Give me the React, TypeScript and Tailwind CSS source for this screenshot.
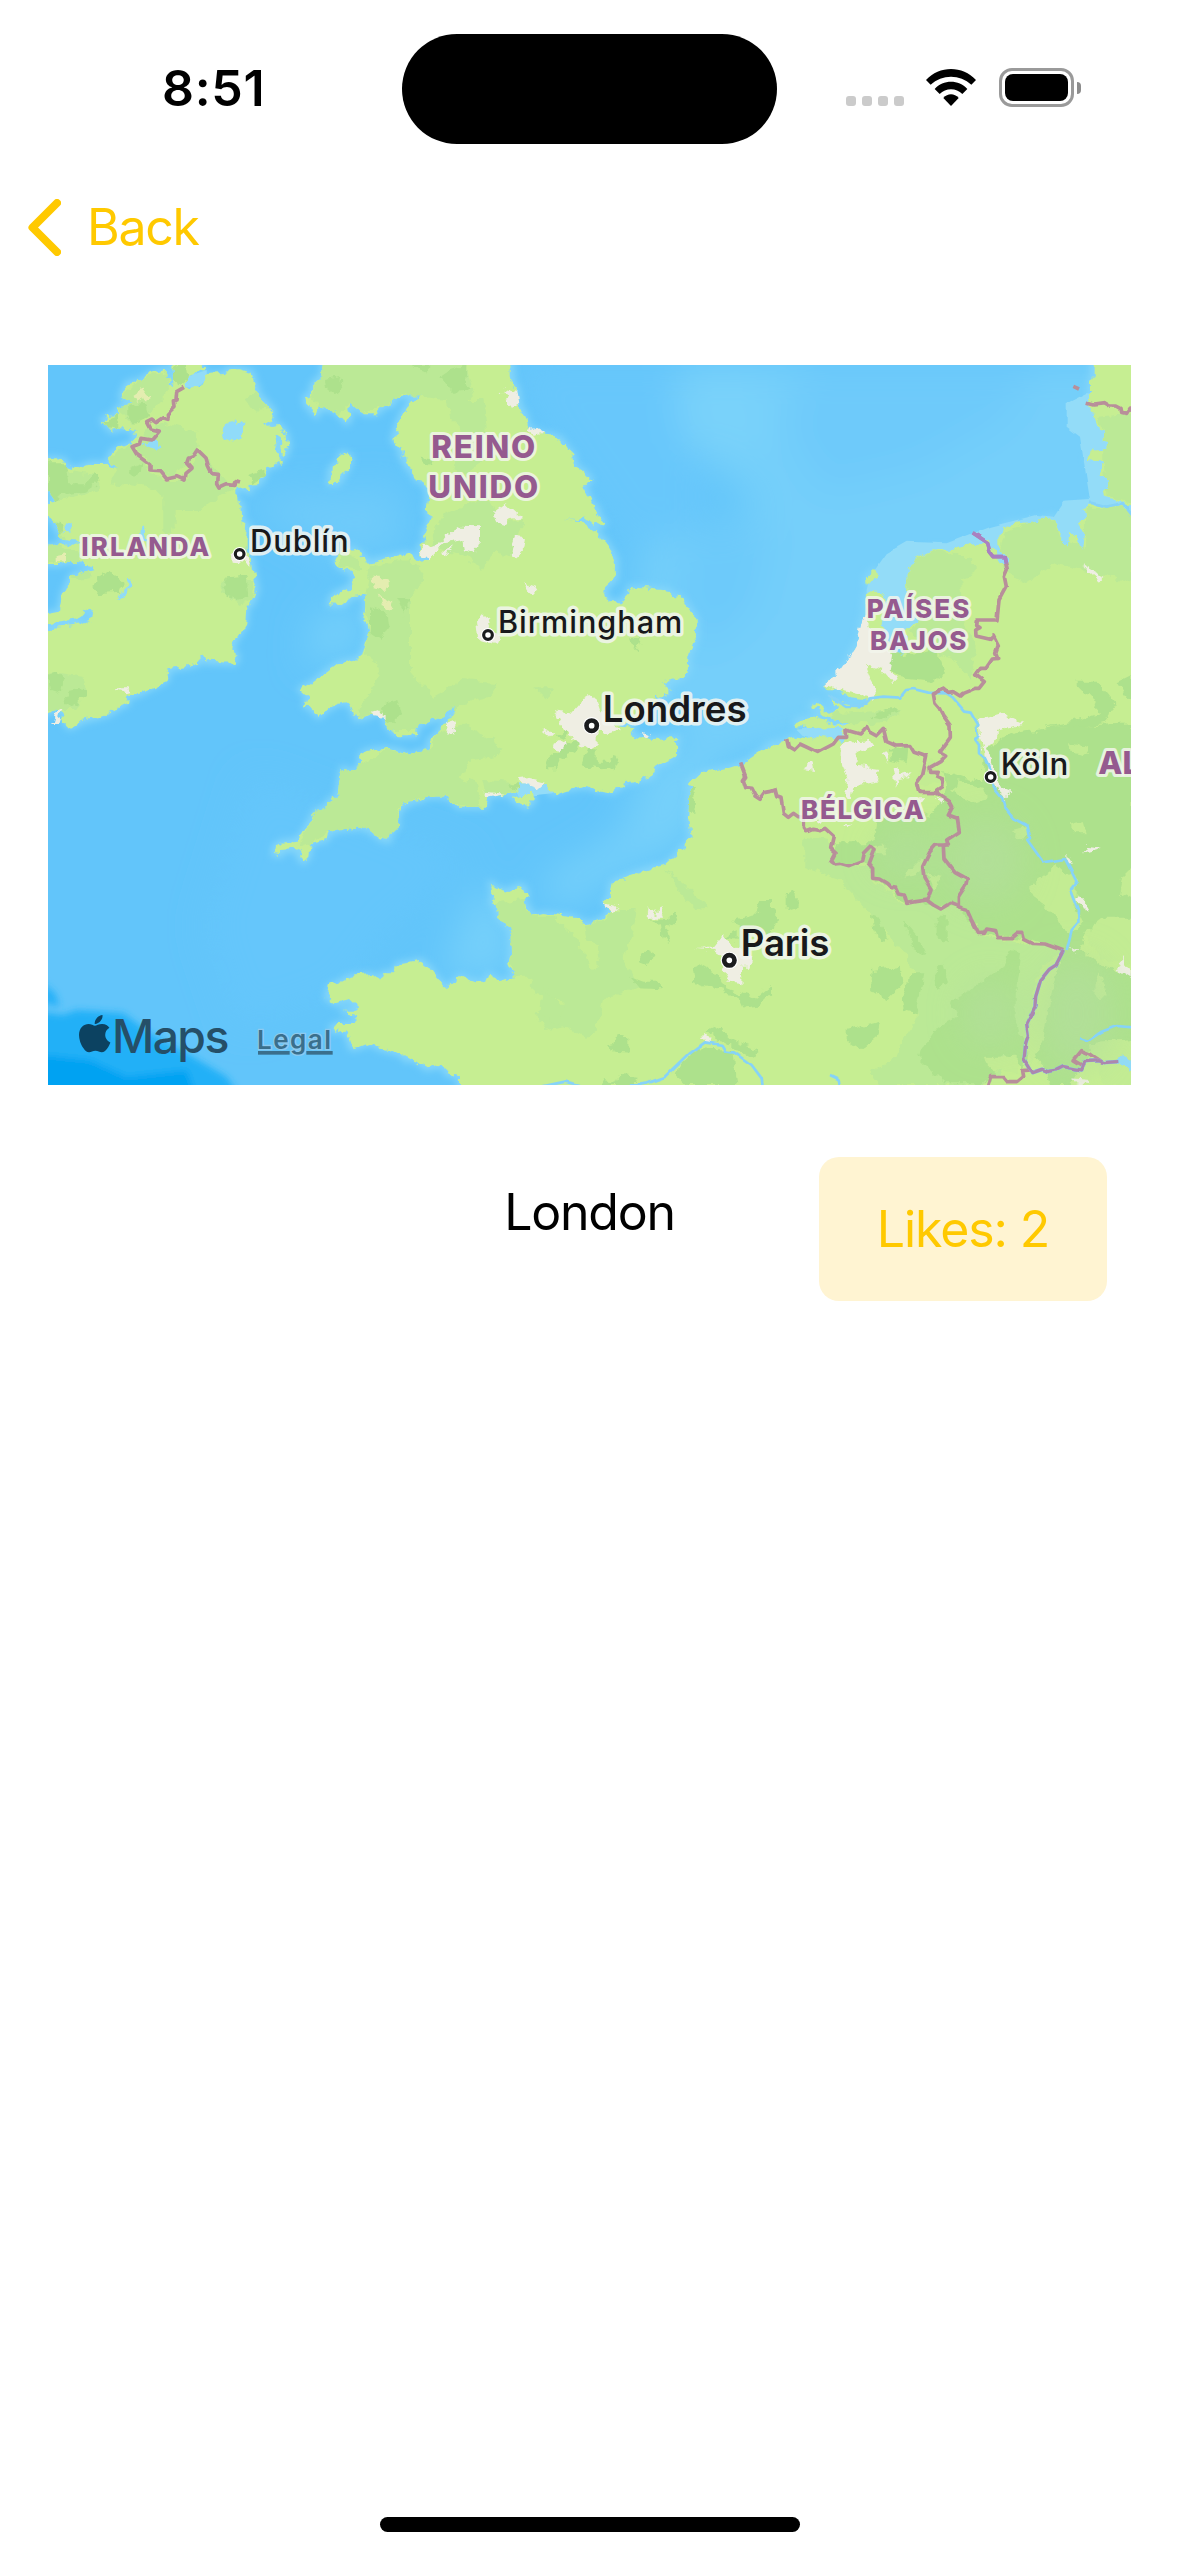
import React from "react";
import { FaApple } from "react-icons/fa";

/* The map is stored as six tiles; every point list is local to its tile. */
const TILES = {
  A: [0, 0],
  B: [1080, 0],
  C: [2190, 0],
  D: [0, 1080],
  E: [1080, 1080],
  F: [2190, 1080],
} as const;

type Tile = keyof typeof TILES;
type Segment = [Tile, string];

function trace(segments: Segment[]): string {
  return segments
    .map(([tile, points]) =>
      points
        .trim()
        .split(/\s+/)
        .map((pair) => {
          const [x, y] = pair.split(",").map(Number);
          return `${x + TILES[tile][0]},${y + TILES[tile][1]}`;
        })
        .join(" "),
    )
    .join(" ");
}

const IRELAND: Segment[] = [
  [
    "A",
    `-40,300 45,297 75,303 75,318 105,328 150,312 210,312 212,322 228,328 207,295 215,278 240,262 275,253 290,235 272,205 240,205 215,213
     188,182 205,168 238,165 230,145 270,130 243,110 262,70 300,62 320,48 335,40 375,25 372,50 392,62 388,85 400,72 395,-30 480,-30 487,30 440,52 437,72 462,84
     484,78 497,45 552,42 566,28 600,28 635,38 640,60 650,82 655,105 680,130 700,155 697,175 665,192 690,198 718,195 738,222
     745,255 738,285 727,283 724,262 722,232 708,222 704,240 708,268 722,290 722,305 705,317 678,322 672,350 655,372 628,375 630,395 608,385 583,388 583,418 604,432 607,490 625,495 620,540
     620,570 635,600 640,640 650,690 635,730 620,740 615,795 592,830 580,850 577,875 592,888 585,908 500,905 490,880 478,888 480,908 445,918
     385,928 380,960 350,975 330,985 290,1005 265,1005 262,1030 240,1040 210,1060 180,1070 130,1082 90,1103 72,1085 64,1055 45,1045 25,1060 -40,1070
     -40,812 24,810 45,800 100,795 128,790 162,772 150,752 128,758 112,778 60,784 -40,790 24,762 60,755 68,705 80,680 95,645 160,628 155,612 110,606 80,606
     60,612 -40,612 -40,560 30,560 70,552 110,560 118,545 70,540 62,525 30,470 -40,455 -40,430 24,430 50,425`,
  ],
];

const BRITAIN: Segment[] = [
  [
    "B",
    `332,-40 335,40 337,65 350,85 358,140 375,165 385,205 430,224 462,228 485,240 500,265 520,285 525,320 545,330 572,357 553,380 565,405
     577,435 590,442 597,468 612,490 600,498 578,490 552,466 528,480 490,478 545,484 588,517 612,540 635,575 648,600 647,655 615,685 613,700 630,727
     662,727 688,700 688,685 738,685 805,692 820,707 840,712 865,745 887,775 888,835 880,855 865,885 863,935 830,962 785,970 805,978 805,1005 765,1008
     778,1025 745,1050 700,1085 640,1098`,
  ],
  [
    "E",
    `700,25 690,42 720,52 760,57 835,54 828,70 828,100 810,120 768,140 755,172 710,182 680,187 640,215 590,208 555,198 495,208 460,222 447,215 445,195
     400,190 360,190 355,207 320,222 262,225 258,260 175,260 155,240 140,230 90,228 60,240 25,245 0,262`,
  ],
  [
    "D",
    `1108,250 1085,240 1083,265 1065,300 1075,315 1052,335 1047,362 1025,358 1005,342 970,322 900,328 865,338 860,358 810,370 805,410 790,425 778,412 778,395
     760,388 725,390 722,405 702,403 705,380 725,368 770,362 790,340 808,308 828,272 860,262 865,245 892,228 900,180 908,145 925,155 950,150
     965,132 960,112 970,98 1000,90 1035,86 1075,92 1110,105`,
  ],
  ["E", "40,104 50,97 85,94 88,65 102,50 135,15"],
  ["B", "166,1050 162,1038 148,1045 130,1070 90,1082 60,1092 50,1110"],
  ["E", "48,46 0,46"],
  [
    "A",
    `1066,1125 1040,1095 1035,1075 1030,1065 1012,1050 990,1068 950,1078 925,1025 890,1032 865,1045 835,1070 818,1050 795,1035 805,1010 780,988 815,970
     860,935 890,913 950,898 970,880 978,850 988,820 980,785 970,775 976,740 975,700 940,708 905,735 868,733 880,705 930,682 945,650 930,635 900,622 885,595
     905,575 935,565 972,590 980,608 1030,597 1060,590 1100,582`,
  ],
  ["B", "30,582 50,600 70,605 88,592 62,582 58,560 77,552 72,520 90,480 80,450 85,400 72,365 50,358 30,325 20,320 20,290 0,270"],
  ["A", "1090,300 1080,262 1060,240 1073,195 1085,165 1103,140"],
  ["B", "15,148 42,115 75,106 50,106 0,108"],
  [
    "A",
    `1065,108 1060,132 1028,140 1010,160 975,160 925,130 922,150 932,170 920,188 900,165 880,148 835,143 830,168 800,135 795,110 815,108 818,75 850,45 852,-40`,
  ],
];

const CONTINENT: Segment[] = [
  [
    "C",
    `1150,-40 968,-40 968,60 960,65 960,120 955,140 970,160 988,205 1000,215 998,245 1018,248 1008,262 997,270 970,272 955,300 1005,305 990,315 992,350
     1017,365 1015,382 1000,388 1008,415 1050,425 1150,470 1150,520 1080,462 1060,437 1010,442 965,430 945,440 948,470 930,490 947,520 940,540 937,568 925,560 920,530 897,510 895,560 870,548
     872,520 850,480 848,473 790,485 705,495 702,520 685,527 685,575 718,588 718,608 692,605 678,580 650,548 570,560 550,570 485,568 440,590 425,610 410,635
     408,700 415,735 450,780 425,795 412,815 408,860 392,885 365,872 350,840 335,790 350,720 345,700 300,697 288,705 285,765 275,790 272,835 250,870
     230,912 190,955 160,968 172,985 200,985 240,1015 300,1022 275,1042 215,1030 180,1018 205,1045 180,1062 140,1028 122,1038 180,1078 240,1090 200,1095 140,1070 80,1082 85,1102 130,1105 200,1100`,
  ],
  ["F", "220,22 222,72 205,60 180,50 150,48 130,58 70,50 40,64 0,72"],
  [
    "E",
    `1085,95 1040,125 995,140 920,157 890,170 865,190 870,205 865,290 872,360 850,380 830,405 795,435 760,442 720,455 690,465 635,490 628,530 615,545
     635,575 600,600 560,612 520,592 430,582 395,590 385,560 365,545 380,525 370,500 355,498 320,515 285,505 272,490 280,515 275,550 290,555 295,590 325,622
     332,650 333,700 328,735 345,772 300,785 265,765 255,790 210,782 180,770 140,805 110,775 85,740 60,722 0,733`,
  ],
  [
    "D",
    `1070,737 1065,760 1030,760 1022,778 990,765 930,770 895,790 870,800 860,832 885,850 930,840 955,865 945,872 908,872 948,885 950,912 900,912
     875,922 880,935 915,928 935,985 960,980 990,968 1020,985 1080,1000 1100,1020`,
  ],
  ["E", "5,1005 50,1022 80,1045 130,1035 140,1060 180,1070 180,1160 2200,1160"],
];

const ISLANDS: Segment[] = [
  ["A", "905,280 932,290 928,315 895,368 868,370 873,325 900,305"],
  ["E", "335,235 362,225 400,225 402,240 380,262 350,246"],
  ["C", "290,675 288,655 315,630 318,655 300,677"],
];

const MID: Segment[] = [
  ["A", "24,420 75,420 180,390 175,345 130,340 70,330 24,300 -30,300 -30,430"],
  ["A", "210,290 270,255 300,290 330,335 380,360 440,360 460,310 470,270 500,300 540,340 580,385 520,420 480,450 410,450 410,505 370,530 370,410 320,380 210,370 225,335"],
  ["A", "320,210 380,190 470,215 480,260 440,310 400,350 340,330 290,265"],
  ["A", "240,110 300,60 380,30 390,90 330,160 280,190 235,150"],
  ["A", "850,45 852,-20 1110,-20 1110,95 1065,110 1060,130 1028,140 975,160 925,130 900,165 880,148 835,143 820,120 820,75"],
  ["A", "-30,470 50,480 75,540 60,560 120,580 120,606 -30,606"],
  ["A", "80,650 150,630 155,655 110,660"],
  ["A", "-30,940 60,940 130,950 140,1000 100,1050 24,1050 -30,1040"],
  ["A", "545,660 640,660 640,720 600,735 545,700"],
  ["A", "905,580 960,600 960,630 900,620"],
  ["A", "990,615 1110,600 1110,1110 1050,1110 1030,1060 950,1075 960,1040 1020,950 1000,900 975,880 990,800 970,720 980,660"],
  ["A", "610,110 655,100 690,145 640,150"],
  ["B", "0,0 190,0 220,95 200,130 0,100"],
  ["B", "140,120 250,120 260,200 250,300 180,350 160,330 180,200 150,170"],
  ["B", "120,470 200,430 270,420 310,490 370,480 350,540 330,590 290,570 240,630 200,590 100,560"],
  ["B", "0,600 50,610 75,660 40,690 10,760 0,800"],
  ["B", "0,900 60,970 100,1010 190,960 290,970 270,1010 190,1030 130,1080 50,1110 0,1110"],
  ["B", "400,985 460,985 440,1020"],
  ["E", "0,105 90,90 110,40 200,15 310,80 300,110 210,120 180,170 230,190 245,260 175,255 100,228 0,250"],
  ["D", "965,130 1000,110 1040,86 1110,105 1110,250 1085,240 1065,300 1075,315 1045,362 1010,345 970,322 862,340 810,370 775,380 828,272 865,245 892,228 908,145"],
  ["E", "285,550 370,540 395,590 460,590 520,640 550,700 575,750 600,740 590,680 560,650 555,615 610,600 650,570 710,570 700,640 670,710 720,800 640,830 610,830 590,930 560,950 500,920 440,930 405,880 480,880 485,840 400,820 390,770 340,770 328,650 295,590"],
  ["E", "430,800 500,870 470,910 420,880"],
  ["E", "800,450 850,490 930,565 890,570 840,520"],
  ["E", "250,180 330,185 355,205 320,220 260,225"],
  ["C", "430,600 485,570 560,580 620,610 620,640 570,660 580,790 620,860 600,960 560,900 480,870 420,820 460,760 410,700 410,640"],
  ["C", "705,520 780,485 850,475 870,540 945,560 950,440 1090,440 1090,670 860,610 770,670 715,640 685,575"],
  ["C", "985,170 1090,160 1090,430 1010,410 1000,300 1000,230"],
  ["C", "180,1060 400,1050 350,1085 290,1090 200,1090"],
  ["F", "100,350 180,360 200,430 300,440 310,480 400,550 470,540 600,570 620,640 700,660 880,690 800,850 780,1000 640,1095 330,1095 300,1060 380,1010 400,950 440,900 440,760 400,700 300,580 210,480 100,440"],
];

const DARK: Segment[] = [
  ["A", "400,20 440,15 445,55 420,75 398,60"],
  ["A", "262,140 320,130 330,170 290,190 262,170"],
  ["A", "190,182 235,165 235,210 205,205"],
  ["A", "24,310 75,310 85,370 130,370 170,340 180,360 135,395 60,405 50,420 24,415"],
  ["A", "24,480 65,490 60,530 24,560"],
  ["A", "270,325 310,310 305,340 285,350"],
  ["A", "160,685 175,650 215,630 250,670 240,695 170,700"],
  ["A", "550,680 560,655 620,650 625,710 590,720 560,710"],
  ["A", "622,345 670,332 672,350 640,372"],
  ["A", "70,1020 100,980 135,985 140,1010 90,1040"],
  ["A", "24,945 50,935 70,960 60,1000 30,990"],
  ["A", "855,60 905,50 910,80 880,108 860,95"],
  ["A", "990,740 1040,760 1045,800 1020,840 990,820"],
  ["A", "1070,710 1110,720 1090,755"],
  ["A", "1025,1035 1075,1020 1085,1060 1060,1090 1030,1070"],
  ["B", "120,50 150,30 200,15 195,70 220,90 160,95"],
  ["B", "30,15 90,15 75,35"],
  ["B", "65,290 95,295 90,320 65,310"],
  ["B", "690,835 725,830 712,870"],
  ["E", "440,148 450,105 500,70 545,60 530,95 485,115 470,148"],
  ["E", "465,45 505,30 500,60"],
  ["E", "545,130 560,85 590,85 590,125 630,125 640,105 655,110 640,145 600,148"],
  ["E", "320,190 360,190 355,210"],
  ["E", "865,205 885,205 880,275 866,275"],
  ["E", "720,710 745,690 765,700 740,738 720,730"],
  ["E", "690,770 730,785 770,785 780,808 720,805"],
  ["E", "750,595 800,600 825,582 832,600 800,625 810,665 785,655 780,620"],
  ["E", "873,740 900,733 960,765 980,800 950,805 880,780"],
  ["E", "970,800 1010,815 1060,835 1110,795 1110,820 1075,860 1035,865 1020,830 975,825"],
  ["E", "1000,610 1010,590 1070,580 1080,540 1110,540 1110,640 1060,640"],
  ["E", "820,1060 900,985 1000,990 1012,1095 860,1095"],
  ["E", "920,940 960,920 1000,960 1075,990 1065,1018 1010,990 960,960"],
  ["E", "615,980 640,975 650,938 685,955 685,995 640,992"],
  ["E", "605,1080 650,1085 660,1065 710,1070 705,1095 610,1095"],
  ["E", "980,650 1010,630 1010,660"],
  ["C", "355,905 370,875 400,885 440,880 500,870 525,940 490,965 390,955"],
  ["C", "300,1070 340,1050 395,1052 330,1075"],
  ["C", "915,965 985,965 1040,1030 1000,1090 930,1100 820,1100 910,1085 990,1060 960,1010"],
  ["C", "1040,970 1090,945 1090,1010 1060,1005"],
  ["F", "640,90 730,40 860,20 1090,10 1090,590 1020,600 950,640 930,690 1000,740 1090,770 1090,1000 960,1000 900,1095 840,1095 820,1040 780,1000 810,880 830,800 880,690 780,660 640,640 560,560 410,550 310,470 290,430 220,435 185,420 195,370 260,370 310,370 320,300 420,270 480,290 530,210 520,150 640,190"],
  ["F", "360,80 415,80 410,130 365,120"],
  ["F", "305,750 395,740 400,790 350,840 300,810"],
  ["F", "230,930 330,905 320,950 270,990 230,965"],
  ["F", "390,830 430,760 460,760 440,880 400,870"],
  ["F", "490,760 520,730 540,790 500,810"],
  ["F", "540,850 600,810 700,740 720,690 750,700 740,790 740,900 770,1000 760,1050 700,1000 660,1090 520,1090 440,1010 500,920 560,890"],
  ["F", "50,520 80,510 80,560 50,570"],
  ["F", "305,590 330,600 350,660 330,670"],
  ["F", "400,600 460,670 470,710 430,690"],
  ["F", "500,590 530,590 530,670 500,650"],
  ["F", "0,570 20,570 15,630 0,630"],
];

const CLEARINGS: Segment[] = [
  ["F", "780,500 860,440 920,480 920,570 940,610 900,650 830,560 790,530"],
  ["F", "560,180 640,200 650,235 600,250 550,215"],
  ["F", "470,460 515,470 490,515"],
  ["F", "720,330 770,320 780,350 740,355"],
  ["F", "940,640 1000,590 1090,590 1090,730 1000,720"],
  ["F", "810,750 870,700 850,790 820,960 780,1040 770,960 790,850"],
  ["F", "960,970 1090,960 1090,1095 1000,1095 980,1030"],
  ["F", "650,1010 740,1010 740,1060 660,1045"],
  ["F", "900,310 940,300 950,340 910,340"],
  ["F", "900,70 950,80 960,105 905,95"],
  ["F", "440,200 450,150 490,120 510,190"],
  ["F", "310,380 360,380 350,400 320,400"],
  ["F", "400,470 460,410 450,460"],
  ["F", "1060,470 1090,440 1090,540 1050,520"],
  ["F", "970,810 990,750 1010,820 990,840"],
];

const PALE: Segment[] = [
  ["A", "280,105 310,85 328,110 295,130"],
  ["A", "50,585 75,580 75,608 50,606"],
  ["A", "988,650 1010,650 1050,670 1030,690 1000,685"],
  ["A", "1020,710 1060,725 1055,748 1030,740"],
];

const URBAN: Segment[] = [
  ["A", "575,582 600,570 625,590 635,620 612,605 578,602"],
  ["A", "225,985 262,985 275,995 260,1000 225,990"],
  ["A", "48,1050 66,1045 50,1068 66,1078 62,1092 36,1092"],
  ["A", "995,1055 1020,1048 1035,1072 1000,1065"],
  ["B", "305,100 325,85 352,90 358,135 335,140 325,115"],
  ["B", "385,210 400,205 430,222 395,228"],
  ["B", "282,458 320,430 370,475 330,480 305,497 288,485"],
  ["B", "60,575 75,558 100,555 125,545 145,520 180,500 240,502 240,545 225,578 195,568 190,540 130,550 85,598"],
  ["B", "332,570 345,530 375,535 370,570 350,592 333,590"],
  ["B", "372,670 415,685 400,702 385,690"],
  ["B", "228,782 258,765 270,800 300,830 292,850 235,840"],
  ["B", "465,1055 510,1060 545,1020 570,1005 590,1020 600,1050 650,1090 640,1110 590,1110 590,1150 565,1170 545,1155 510,1130 480,1090"],
  ["B", "128,580 152,560 140,585"],
  ["E", "135,10 165,0 170,20 150,42 140,30"],
  ["E", "420,25 460,42 450,52"],
  ["E", "455,75 480,60 505,75 470,92"],
  ["E", "725,32 752,45 735,55"],
  ["E", "357,175 380,172 435,185 410,208 375,195"],
  ["E", "253,212 318,218 262,230"],
  ["E", "613,545 660,560 640,577"],
  ["E", "733,565 775,583 780,555 792,590 755,590"],
  ["E", "880,683 935,683 970,640 1000,680 1060,710 1055,740 1025,740 1028,790 985,785 965,750 985,720 945,690"],
  ["E", "903,948 920,945 935,965 915,970"],
  ["E", "615,15 660,30 610,45"],
  ["C", "280,765 300,810 350,865 372,890 365,925 382,965 365,965 335,930 285,915 300,955 318,985 315,1020 270,1005 190,985 160,968 190,955 250,870"],
  ["C", "940,618 980,640 1003,650 990,665 960,640"],
  ["C", "625,1080 690,1060 760,1090 690,1110 670,1150 640,1170 630,1120"],
  ["F", "215,80 240,65 300,60 310,75 260,100 260,140 330,150 325,180 250,195 245,240 225,240 235,180 215,120"],
  ["F", "100,145 130,125 135,150"],
  ["F", "335,105 350,100 355,130"],
  ["F", "365,145 385,140 390,165 425,160 410,175 380,180 375,205"],
  ["F", "215,310 255,308 225,322"],
  ["F", "640,80 660,110 690,200 725,215 705,235 680,210 665,170 640,110"],
  ["F", "940,400 950,378 1000,385 960,395"],
  ["F", "885,410 900,408 908,432 895,428"],
  ["F", "917,535 940,540 958,575 930,560"],
  ["F", "900,678 928,685 912,698"],
  ["F", "1040,750 1055,715 1085,750 1085,778"],
  ["F", "900,1075 960,1080 940,1095 920,1090"],
  ["F", "130,300 155,300 145,312"],
  ["F", "440,235 465,235 450,255"],
  ["F", "498,235 520,235 510,250"],
];

const LAKES: Segment[] = [
  ["A", "560,180 585,175 590,188 610,185 608,235 580,248 550,235"],
  ["A", "310,250 335,240 365,262 362,270 325,260"],
  ["A", "265,655 272,665 262,700 235,722 240,700 255,690"],
  ["A", "305,495 312,500 320,540 345,570 325,560 300,530"],
  ["A", "75,490 95,495 98,515 68,512"],
  ["F", "1050,1000 1085,1020 1085,1050 1040,1025"],
];

const BORDERS: Segment[][] = [
  [
    [
      "A",
      `432,82 410,95 408,120 400,122 402,142 382,162 384,178 368,173 345,188 335,180 320,188 330,207 358,213 335,240 303,235 298,252 276,260 290,283 310,297 330,312
       330,333 362,335 380,357 410,350 432,360 435,340 453,325 440,310 445,295 458,290 472,269 498,294 505,318 515,338 535,340 533,372 540,384 562,374 585,376 588,362 600,366`,
    ],
  ],
  [["C", "950,127 970,132 1003,128 1020,138 1040,138 1053,145 1055,157 1070,160 1078,147 1090,150"]],
  [["C", "910,79 927,87"]],
  [
    [
      "C",
      `608,518 653,548 660,575 672,590 703,590 712,628 703,650 709,680 687,720 681,780 622,780 620,797 630,803 617,810 618,828 660,838 670,828 685,858 677,880 683,895 667,897
       648,925 632,925 617,945 643,965 627,985 615,985 578,1000 570,1008 550,995 535,997 522,987 490,1002 495,1030 508,1045 518,1065 540,1095`,
    ],
    ["F", "541,55 512,95 530,105 510,125 480,142 482,157 505,157 500,172 518,180 515,200 500,210 505,225"],
  ],
  [
    [
      "E",
      "1022,130 1037,170 1030,180 1037,203 1053,205 1065,228 1080,238 1095,218 1110,215",
    ],
    [
      "F",
      `15,210 20,230 33,235 40,280 55,292 70,280 85,290 103,292 103,325 110,335 130,328 150,332 165,325 190,348 182,385 198,400 185,425 195,432 210,430 237,437 275,422 280,400 302,377
       312,385 295,430 308,445 308,475 328,477 350,490 362,502 380,505 388,522 403,525 410,550 438,545 470,540 490,555 512,567 540,550 565,560 590,568 603,597 625,640 643,640
       650,627 677,632 682,653 725,653 740,640 755,640 760,658 785,670 825,672 880,692`,
    ],
  ],
  [
    [
      "F",
      `50,57 55,80 72,90 90,72 143,97 190,72 205,52 230,52 228,30 270,42 293,17 302,35 320,45 340,25 350,65 380,78 420,77 432,97 470,110 458,165 440,190 447,217 500,218 540,245
       548,260 535,285 562,295 568,335 530,360 535,375 498,375 480,395 458,440 462,475 483,510 472,540`,
    ],
  ],
  [["F", "530,372 520,378 522,415 555,458 592,478 588,495 565,530 565,560"]],
  [["F", "780,1050 755,1052 758,1070 740,1085 712,1085 700,1070 665,1070 655,1100"]],
  [["F", "945,1040 912,1020 935,992 955,1000 970,1010 985,1020 995,1028"]],
];

const RIVER_BORDERS: Segment[][] = [
  [
    [
      "F",
      `880,692 858,735 838,748 812,780 797,830 795,860 770,912 775,945 767,970 762,1020 785,1058 815,1048 830,1055 860,1050 880,1040 935,1050 945,1025 985,1022 1000,1028 1042,1025`,
    ],
  ],
];

const RIVERS: Segment[][] = [
  [["C", "175,1005 225,1038 275,1038 300,1015 340,1010 390,1013 408,990 430,987 475,998 530,1000 548,1012 582,1052 602,1055 625,1095"], ["F", "618,25 625,45 615,58 627,75 627,100 645,115 662,150 668,200 697,235 703,262 730,295 773,318 780,355 772,360 820,427 885,417 920,485 903,507 927,570 925,607 905,630 890,690"]],
  [["C", "960,428 1010,440 1058,430 1090,470"]],
  [["E", "690,1100 740,1090 797,1070 870,1000 915,967 968,975 980,995 1003,998 1055,1035 1085,1075 1088,1100"]],
  [["E", "425,1100 495,1085 540,1095"]],
  [["F", "930,955 955,962 995,935 1040,918 1090,922"]],
  [["F", "180,1068 205,1080 212,1100"]],
];

function Shapes({ items, fill }: { items: Segment[]; fill: string }) {
  return (
    <g fill={fill}>
      {items.map((segment, i) => (
        <polygon key={i} points={trace([segment])} />
      ))}
    </g>
  );
}

function Lines({ items, color, width }: { items: Segment[][]; color: string; width: number }) {
  return (
    <g fill="none" stroke={color} strokeWidth={width} strokeLinejoin="round">
      {items.map((segments, i) => (
        <polyline key={i} points={trace(segments)} />
      ))}
    </g>
  );
}

type LabelProps = { x: number; y: number; size: number; width?: number; children: string };

function Country({ x, y, size, width, children }: LabelProps) {
  return (
    <text
      x={x}
      y={y}
      fontSize={size}
      textLength={width}
      fontWeight={800}
      fill="#955a8f"
      stroke="#f3f6ec"
      strokeOpacity={0.85}
      strokeWidth={18}
      strokeLinejoin="round"
      paintOrder="stroke"
    >
      {children}
    </text>
  );
}

function City({ x, y, size, width, children, weight = 500 }: LabelProps & { weight?: number }) {
  return (
    <text
      x={x}
      y={y}
      fontSize={size}
      textLength={width}
      fontWeight={weight}
      fill="#18191b"
      stroke="#f3f6f0"
      strokeOpacity={0.85}
      strokeWidth={21}
      strokeLinejoin="round"
      paintOrder="stroke"
    >
      {children}
    </text>
  );
}

function Marker({ x, y, big }: { x: number; y: number; big?: boolean }) {
  return (
    <g>
      <circle cx={x} cy={y} r={big ? 26 : 21} fill="#fff" />
      <circle cx={x} cy={y} r={big ? 15.5 : 13} fill="#fff" stroke="#1b1c1e" strokeWidth={big ? 14 : 9.5} />
    </g>
  );
}

function MapView() {
  const land = [trace(IRELAND), trace(BRITAIN), trace(CONTINENT), ...ISLANDS.map((s) => trace([s]))];
  return (
    <svg
      viewBox="24 15 3249 2160"
      className="block h-[720px] w-[1083px] shrink-0 overflow-hidden"
      fontFamily="Inter, 'Liberation Sans', sans-serif"
    >
      <defs>
        <filter id="coast" filterUnits="userSpaceOnUse" x="-60" y="-60" width="3420" height="2320" colorInterpolationFilters="sRGB">
          <feTurbulence type="fractalNoise" baseFrequency="0.035" numOctaves="3" seed="4" />
          <feDisplacementMap in="SourceGraphic" scale="30" xChannelSelector="R" yChannelSelector="G" />
        </filter>
        <filter id="wiggle" filterUnits="userSpaceOnUse" x="-60" y="-60" width="3420" height="2320" colorInterpolationFilters="sRGB">
          <feTurbulence type="fractalNoise" baseFrequency="0.025" numOctaves="1" seed="9" />
          <feDisplacementMap in="SourceGraphic" scale="14" xChannelSelector="R" yChannelSelector="G" />
        </filter>
        <filter id="soft" filterUnits="userSpaceOnUse" x="-200" y="-200" width="3700" height="2600">
          <feGaussianBlur stdDeviation="55" />
        </filter>
        <filter id="shore" filterUnits="userSpaceOnUse" x="-200" y="-200" width="3700" height="2600">
          <feGaussianBlur stdDeviation="11" />
        </filter>
        <clipPath id="land">
          {land.map((points, i) => (
            <polygon key={i} points={points} />
          ))}
        </clipPath>
      </defs>

      <rect x="0" y="0" width="3300" height="2200" fill="#62c5fa" />
      <g filter="url(#soft)">
        <polygon points="1400,0 2000,0 2000,500 1750,560 1500,200" fill="#68c7fb" />
        <polygon points="1930,0 3300,0 3300,700 2500,1100 2050,1200 1750,1000 1800,560 2150,450 1930,220" fill="#75cffa" />
        <polygon points="2320,0 3000,0 2900,180 2640,330 2350,400 2230,200" fill="#6ecafa" />
        <polygon points="1900,60 2160,40 2200,240 2080,310 1930,250" fill="#79d2fa" />
        <polygon points="1960,480 2200,520 2140,760 1990,880 1900,700" fill="#6dcafa" />
        <polygon points="1820,1200 1950,1150 2060,1150 1960,1440 1700,1560 1560,1660 1500,1560 1740,1420" fill="#76d0fa" />
        <polygon points="1300,1600 1400,1620 1420,1840 1200,1860" fill="#76d0fa" />
        <polygon points="700,400 1080,380 1100,560 900,600 620,440" fill="#6ecbfa" />
        <polygon points="820,770 980,740 960,860 800,920" fill="#76d0fa" />
        <polygon points="640,1250 1080,1420 1300,1500 1050,1700 900,1900 600,2000 500,1700" fill="#65c6fb" />
      </g>
      <g filter="url(#shore)">
        <polygon points="-40,1950 70,1965 110,1950 250,1960 330,2020 440,2080 560,2150 620,2240 -40,2240" fill="#22b0f7" />
        <polygon points="-40,2080 150,2100 260,2150 440,2130 480,2240 -40,2240" fill="#02a2f2" />
        <polygon points="10,1870 45,1900 60,1940 10,1930" fill="#27b1f8" />
        {land.map((points, i) => (
          <polygon key={i} points={points} fill="#84d6fa" stroke="#84d6fa" strokeWidth="18" strokeLinejoin="round" />
        ))}
      </g>
      <g fill="#93dcf8" filter="url(#wiggle)">
        <polygon points="2480,690 2490,650 2540,580 2600,545 2720,550 2850,500 2990,465 3040,470 3070,425 3150,420 3120,230 3080,200 3080,130 3140,100 3290,100 3290,480 3130,640 2700,700 2600,880 2480,800" />
        <polygon points="2270,1110 2420,1090 2430,1170 2290,1130" />
        <polygon points="1420,1260 1540,1260 1540,1300 1440,1310" />
        <polygon points="430,80 440,50 500,30 500,60 470,84" />
      </g>

      <g filter="url(#coast)">
        {land.map((points, i) => (
          <polygon key={i} points={points} fill="#c6ee92" />
        ))}
        <g clipPath="url(#land)">
          <Shapes items={MID} fill="#bbe996" />
          <Shapes items={DARK} fill="#ade18c" />
          <Shapes items={CLEARINGS} fill="#c3ec93" />
          <Shapes items={PALE} fill="#e4edb0" />
        </g>
        <Shapes items={URBAN} fill="#efeee3" />
        <Shapes items={LAKES} fill="#90dbf9" />
      </g>
      <g clipPath="url(#land)">
        <g filter="url(#soft)" fill="#b4df9d" opacity="0.7">
          <ellipse cx="2840" cy="1500" rx="110" ry="130" />
          <ellipse cx="3110" cy="1960" rx="110" ry="170" />
          <ellipse cx="2600" cy="1480" rx="90" ry="60" />
          <ellipse cx="2850" cy="1960" rx="80" ry="100" />
        </g>
      </g>

      <g filter="url(#wiggle)">
        <Lines items={RIVERS} color="#86d3f8" width={8} />
        <Lines items={BORDERS} color="#b88f9a" width={11} />
        <Lines items={RIVER_BORDERS} color="#86c3f3" width={11} />
        <Lines items={RIVER_BORDERS} color="#ac87ae" width={9.5} />
        <polyline points={trace([["C", "608,518 653,548 660,575 672,590 703,590 706,608"]])} fill="none" stroke="#a981c2" strokeWidth="11" />
      </g>

      <Country x={1174} y={294} size={94} width={312}>REINO</Country>
      <Country x={1165} y={413} size={94} width={330}>UNIDO</Country>
      <Country x={124} y={588} size={77} width={384}>IRLANDA</Country>
      <Country x={2480} y={773} size={78} width={308}>PAÍSES</Country>
      <Country x={2490} y={870} size={78} width={289}>BAJOS</Country>
      <Country x={2283} y={1377} size={78} width={368}>BÉLGICA</Country>
      <Country x={3175} y={1242} size={94}>AL</Country>

      <Marker x={599} y={582} />
      <Marker x={1344} y={825} />
      <Marker x={1655} y={1097} big />
      <Marker x={2852} y={1251} />
      <Marker x={2068} y={1801} big />

      <City x={630} y={575} size={93} width={296}>Dublín</City>
      <City x={1374} y={819} size={92} width={553}>Birmingham</City>
      <City x={1688} y={1085} size={110} width={432} weight={600}>Londres</City>
      <City x={2882} y={1244} size={94} width={203}>Köln</City>
      <City x={2102} y={1788} size={110} width={266} weight={600}>Paris</City>

      <FaApple x={100} y={1957} size={128} color="#0c4261" />
      <text x={216} y={2078} fontSize={139} textLength={352} fontWeight={500} fill="#254f68">Maps</text>
      <g fill="#3a6f8c">
        <text
          x={651}
          y={2067}
          fontSize={78}
          textLength={222}
          fontWeight={600}
          stroke="#8ccaf0"
          strokeWidth={8}
          paintOrder="stroke"
        >
          Legal
        </text>
        <rect x={654} y={2073} width={95} height={11} />
        <rect x={799} y={2073} width={79} height={11} />
      </g>
    </svg>
  );
}

function StatusBar() {
  return (
    <header className="flex h-[177px] shrink-0 items-start pt-[34px]">
      <div className="flex h-[110px] w-[402px] items-center pl-[162px] text-[50px] leading-none font-semibold">
        <span className="-mt-[2px] tracking-[0.7px]">8:51</span>
      </div>
      <div className="h-[110px] w-[375px] shrink-0 rounded-full bg-black" />
      <div className="flex h-[110px] items-center pl-[69px]">
        <div className="mt-[23px] flex gap-[6px]">
          <i className="size-[10px] rounded-[3px] bg-[#cbcbcb]" />
          <i className="size-[10px] rounded-[3px] bg-[#cbcbcb]" />
          <i className="size-[10px] rounded-[3px] bg-[#cbcbcb]" />
          <i className="size-[10px] rounded-[3px] bg-[#cbcbcb]" />
        </div>
        <svg viewBox="0 0 150 111" className="-mt-[3px] ml-[22px] h-[37px] w-[50px]">
          <path d="M0 33C40 -11 110 -11 150 33L136 47C102 15 48 15 14 47Z" />
          <path d="M26 60C52 31 98 31 124 60L109 75C91 56 59 56 41 75Z" />
          <path d="M52 87C65 72 85 72 98 87L75 111Z" />
        </svg>
        <div className="-mt-[3px] ml-[23px] flex h-[39px] w-[75px] items-center justify-center rounded-[13px] border-[3px] border-[#9a9a9a]">
          <div className="h-[27px] w-[63px] rounded-[8px] bg-black" />
        </div>
        <div className="-mt-[3px] ml-[3px] h-[12px] w-[4px] rounded-r-full bg-[#8c8c8c]" />
      </div>
    </header>
  );
}

export default function App() {
  return (
    <div className="flex h-[2556px] w-[1179px] flex-col overflow-hidden bg-white font-['Inter','Liberation_Sans',sans-serif] text-black">
      <StatusBar />
      <nav className="flex h-[100px] shrink-0 items-center pl-[28px] text-[#ffc900]">
        <svg viewBox="0 0 33 57" className="h-[57px] w-[33px]" fill="none" stroke="currentColor" strokeWidth="8" strokeLinecap="round" strokeLinejoin="round">
          <path d="M29 4L4.500 28.500L29 53" />
        </svg>
        <span className="ml-[26px] text-[50px] leading-none tracking-[-1.3px]">Back</span>
      </nav>
      <main className="flex grow flex-col items-center pt-[88px]">
        <MapView />
        <section className="grid w-full grid-cols-3 pt-[72px]">
          <span />
          <p className="pt-[25px] text-center text-[50px] leading-[60px] tracking-[-1.2px]">London</p>
          <div className="flex justify-end pr-[72px]">
            <button className="h-[144px] w-[288px] rounded-[20px] bg-[#fff4d2] text-[50px] leading-none tracking-[-1.1px] text-[#ffc900]">
              Likes: 2
            </button>
          </div>
        </section>
      </main>
      <footer className="flex shrink-0 justify-center pb-[24px]">
        <div className="h-[15px] w-[420px] rounded-full bg-black" />
      </footer>
    </div>
  );
}
